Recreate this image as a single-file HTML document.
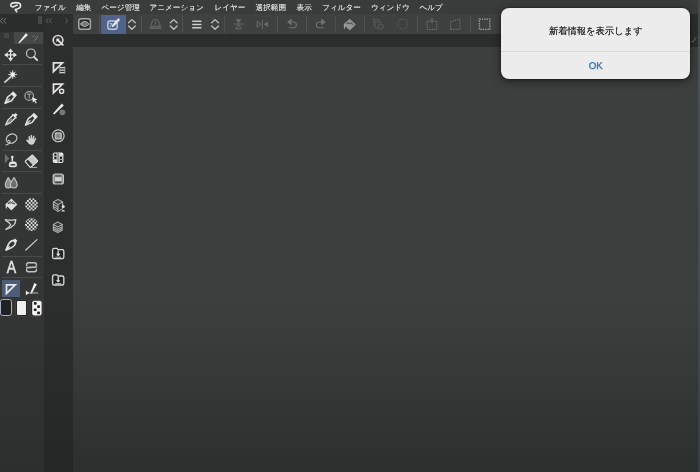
<!DOCTYPE html>
<html lang="ja">
<head>
<meta charset="utf-8">
<title>CLIP STUDIO PAINT</title>
<style>
*{margin:0;padding:0;box-sizing:border-box}
html,body{width:700px;height:472px;overflow:hidden;background:#2e3231}
body{position:relative;font-family:"Liberation Sans",sans-serif;color:#cfd0cf}
.abs{position:absolute}
#canvas{left:73px;top:47px;width:627px;height:425px;background:linear-gradient(180deg,#3b3f3d 0%,#3b3f3d 58%,#343837 79%,#2b2f2e 100%)}
#menubar{left:0;top:0;width:700px;height:14px;background:#393c3b}
#menubar span{position:absolute;top:2.8px;height:10px;line-height:10px;font-size:7.6px;color:#d6d7d6;white-space:nowrap;letter-spacing:0;text-rendering:geometricPrecision;filter:blur(0.35px);text-shadow:0 0 0.5px #d6d7d6}
#cmdbar{left:73px;top:14px;width:627px;height:20px;background:#3e4140}
#band{left:73px;top:34px;width:627px;height:13px;background:#2c2e2d}
#tools{left:0;top:14px;width:44px;height:458px;background:linear-gradient(180deg,#333635 0%,#333635 62%,#2c2f2e 100%)}
#sub{left:44px;top:14px;width:29px;height:458px;background:linear-gradient(180deg,#2c2e2d 0%,#2c2e2d 62%,#252726 100%)}
#toolhead{left:0;top:14px;width:44px;height:18px;background:#2b2d2c}
.vsep{position:absolute;top:16px;width:1px;height:17px;background:#4f5251}
.hsep{position:absolute;left:2px;width:40px;height:1px;background:#474a49}
svg{position:absolute;overflow:visible}
#dialog{left:501.3px;top:8.4px;width:188.6px;height:70.2px;border-radius:8px;background:#ececec;box-shadow:0 0 1.5px rgba(0,0,0,.75),0 2px 8px rgba(0,0,0,.55)}
#dialog .msg{position:absolute;left:0;top:16.3px;width:189px;text-align:center;font-size:9.3px;line-height:12px;color:#2c2c2c;text-rendering:geometricPrecision;filter:blur(0.3px);text-shadow:0 0 0.4px #2c2c2c}
#dialog .line{position:absolute;left:0;top:42.3px;width:189px;height:1px;background:#d9d9d9}
#dialog .ok{position:absolute;left:0;top:52.6px;width:189px;text-align:center;font-size:9.7px;line-height:12px;color:#2f70b6;-webkit-text-stroke:0.3px #2f70b6;text-rendering:geometricPrecision;filter:blur(0.35px)}
</style>
</head>
<body>
<div id="app" class="abs" style="left:0;top:0;width:700px;height:472px;filter:blur(0.45px)">
<div id="canvas" class="abs"></div>
<div id="menubar" class="abs">
<span style="left:34.7px">ファイル</span>
<span style="left:76.2px">編集</span>
<span style="left:101.5px">ページ管理</span>
<span style="left:149.5px">アニメーション</span>
<span style="left:214.4px">レイヤー</span>
<span style="left:255.6px">選択範囲</span>
<span style="left:296.6px">表示</span>
<span style="left:322.2px">フィルター</span>
<span style="left:371.0px">ウィンドウ</span>
<span style="left:419.5px">ヘルプ</span>
</div>
<div id="cmdbar" class="abs"></div>
<div id="band" class="abs"></div>
<div id="tools" class="abs"></div>
<div id="sub" class="abs"></div>
<div id="toolhead" class="abs"></div>

<!-- header controls -->
<div class="abs" style="left:38px;top:16.3px;width:4px;height:8px;background:#464948;filter:blur(0.4px)"></div>
<div class="abs" style="left:14px;top:32px;width:29px;height:12px;background:#454847"></div>
<div class="abs" style="left:4px;top:33px;width:5px;height:5px;background:#444746;filter:blur(0.5px)"></div>
<div class="abs" style="left:32px;top:34px;width:9px;height:8px;line-height:8px;font-size:6.5px;color:#8f9291;filter:blur(0.35px)">ツ</div>
<div class="hsep" style="top:64.1px"></div>
<div class="hsep" style="top:86.1px"></div>
<div class="hsep" style="top:107.6px"></div>
<div class="hsep" style="top:149.6px"></div>
<div class="hsep" style="top:171.1px"></div>
<div class="hsep" style="top:192.6px"></div>
<div class="hsep" style="top:256.1px"></div>
<div class="hsep" style="top:276.6px"></div>
<div class="abs" style="left:2px;top:280px;width:18px;height:17px;background:#4c5c79"></div>
<div class="abs" style="left:5.7px;top:260.4px;width:11px;height:16px;line-height:16px;font-size:16px;color:#e4e4e4;-webkit-text-stroke:0.45px #e4e4e4;transform:scaleX(0.88);transform-origin:50% 50%;filter:blur(0.4px)">A</div>
<!-- colour swatches -->
<div class="abs" style="left:0.4px;top:299.2px;width:11.6px;height:16.6px;background:#1f2221;border:1.8px solid #a8b0c6;border-radius:2.8px;filter:blur(0.4px)"></div>
<div class="abs" style="left:15.2px;top:298.6px;width:12.4px;height:18.8px;background:#242625;border:0.8px solid #3c3f3e;border-radius:3px"></div>
<div class="abs" style="left:16.8px;top:301px;width:9px;height:13.8px;background:#f0f0f0;border-radius:1px;filter:blur(0.4px)"></div>
<div class="abs" style="left:30.2px;top:298.6px;width:13.2px;height:18.8px;background:#242625;border:0.8px solid #3c3f3e;border-radius:3px"></div>
<!-- command bar -->
<div class="vsep" style="left:99px"></div>
<div class="vsep" style="left:140.5px"></div>
<div class="vsep" style="left:182.2px"></div>
<div class="vsep" style="left:224px"></div>
<div class="vsep" style="left:277.2px"></div>
<div class="vsep" style="left:306px"></div>
<div class="vsep" style="left:335px"></div>
<div class="vsep" style="left:364px"></div>
<div class="vsep" style="left:417.2px"></div>
<div class="vsep" style="left:470px"></div>
<div class="abs" style="left:101.1px;top:15px;width:24.9px;height:18.5px;background:#4f638b"></div>
<div class="abs" style="left:690px;top:14px;width:8px;height:33px;background:#2c2e2d"></div>
<svg id="icons" class="abs" style="left:0;top:0;filter:blur(0.4px)" width="700" height="472" viewBox="0 0 700 472" fill="none" stroke-linecap="round" stroke-linejoin="round">
<!--ICONS_START-->
<defs><pattern id="dots" x="25.1" y="198.2" width="3.7" height="3.7" patternUnits="userSpaceOnUse"><rect x="0" y="0" width="1.85" height="1.85" fill="#e4e4e4"/><rect x="1.85" y="1.85" width="1.85" height="1.85" fill="#e4e4e4"/></pattern></defs>
<!-- logo -->
<path d="M16.7,11.7 L15.3,9.5 C17.6,9 20.6,8 20.6,5.7 C20.6,3.5 18.4,2.6 15.8,2.6 C13,2.6 10.8,3.5 10.8,5.2 C10.8,6.6 12.2,7.2 13.5,6.7 C14.7,6.2 15.8,5.4 17.2,5.3" stroke="#e9e9e9" stroke-width="1.6"/>
<!-- header chevrons -->
<g stroke="#747776" stroke-width="1">
<path d="M2.6,18.3 L0.4,20.8 L2.6,23.3 M5.8,18.3 L3.6,20.8 L5.8,23.3"/>
<path d="M48,18.6 L46,20.7 L48,22.8 M51.4,18.6 L49.4,20.7 L51.4,22.8" stroke="#636665"/>
<path d="M65.6,18.4 L68,20.6 L65.6,22.8" stroke="#5e6160"/>
</g>
<!-- tab pen -->
<path d="M18.2,42.9 L25.9,33.3 L27.9,35 L19.4,43.3 Z" fill="#f2f2f2"/>
<!-- row1: move / zoom -->
<g stroke="#e2e2e2" stroke-width="1.3">
<path d="M10.6,50.5 V59.5 M6,54.9 H15.2"/>
</g>
<g fill="#e6e6e6">
<path d="M10.6,48.4 L13.2,52 H8 Z M10.6,61.4 L13.2,57.8 H8 Z M4.2,54.9 L7.8,52.3 V57.5 Z M17,54.9 L13.4,52.3 V57.5 Z"/>
</g>
<circle cx="30.9" cy="53.4" r="4.4" stroke="#c2c2c2" stroke-width="1.2"/>
<path d="M34,56.8 L37.2,60.2" stroke="#e0e0e0" stroke-width="1.8"/>
<!-- row2: wand -->
<path d="M10.6,77 L4.9,82.2" stroke="#cfcfcf" stroke-width="1.7"/>
<g stroke="#e4e4e4" stroke-width="0.9">
<path d="M12.7,70.6 V78.6 M8.7,74.6 H16.7 M10,71.9 L15.4,77.3 M15.4,71.9 L10,77.3"/>
</g>
<circle cx="12.7" cy="74.6" r="2.3" fill="#f0f0f0"/>
<!-- row3: pen nib / text cursor -->
<g transform="translate(9.9,98.5) rotate(45)">
<path d="M-2.1,-6.6 H2.1 V-3.2 L2.7,0.4 L0,6.9 L-2.7,0.4 L-2.1,-3.2 Z" stroke="#e0e0e0" stroke-width="1.5"/>
<path d="M-2.1,-6.6 H2.1 V-4 H-2.1 Z" fill="#e6e6e6"/>
<path d="M0,6.4 V0.6" stroke="#e6e6e6" stroke-width="1.1"/>
</g>
<circle cx="29.2" cy="96" r="4.3" stroke="#a6a6a6" stroke-width="1.2"/>
<path d="M27.4,94.2 H31 M29.2,94.2 V98.2" stroke="#a6a6a6" stroke-width="1"/>
<path d="M32.2,97.2 L37.4,99.6 L35.2,100.4 L36.8,102.8 L35.8,103.4 L34.2,101 L32.8,102.6 Z" fill="#eeeeee"/>
<!-- row4: eyedropper / pen nib -->
<g transform="translate(11,119.6) rotate(45)">
<path d="M-1.4,-8 H1.4 V-5 H-1.4 Z" fill="#e6e6e6"/>
<path d="M-2.3,-4.8 H2.3" stroke="#e6e6e6" stroke-width="1.4"/>
<path d="M-1.8,-4 V2.4 L0,7.6 L1.8,2.4 V-4" stroke="#e0e0e0" stroke-width="1.3"/>
<path d="M0,6.8 V-1" stroke="#d8d8d8" stroke-width="0.9"/>
</g>
<g transform="translate(30.5,120.2) rotate(45)">
<path d="M-2.1,-7 H2.1 V-3.4 L2.7,0.4 L0,7 L-2.7,0.4 L-2.1,-3.4 Z" stroke="#e0e0e0" stroke-width="1.5"/>
<path d="M-2.1,-7 H2.1 V-4.2 H-2.1 Z" fill="#e6e6e6"/>
<path d="M0,6.4 V0.6" stroke="#e6e6e6" stroke-width="1.1"/>
</g>
<!-- row5: lasso / hand -->
<g transform="rotate(-25 11.6 138.6)">
<ellipse cx="11.6" cy="138.6" rx="5.5" ry="4.4" stroke="#c4c4c4" stroke-width="1.2"/>
</g>
<path d="M8.2,140.4 C10.4,140.6 10.8,143 8.8,143.8 C7.8,144.4 6.8,144.8 5.8,145" stroke="#c4c4c4" stroke-width="1.1"/>
<path d="M27.4,139.4 L28.7,140.4 L28.4,136.4 L29.7,136 L30.5,139 L30.7,135 L32,135 L32.2,139 L33.3,135.6 L34.6,136 L33.9,139.8 L35.4,137.8 L36.3,138.6 L34.4,142.8 C33.8,144.4 32.7,144.8 31.4,144.8 C29.7,144.8 28.7,144 27.8,142.6 L26,140.2 Z" fill="#cfcfcf"/>
<!-- row6: stamp / eraser -->
<path d="M4.8,153.8 L9.4,158.6 L4.8,163.4 Z" fill="#6a6d6c"/>
<path d="M12.3,157 V160.6" stroke="#e4e4e4" stroke-width="1.5"/>
<circle cx="12.3" cy="157" r="1.3" fill="#e4e4e4"/>
<path d="M8.8,164.8 C8.8,162.2 10.4,161.2 12.8,161.2 C15.2,161.2 17,162.2 17,164.8 C17,166.6 16,167.2 14.8,167.2 H11 C9.8,167.2 8.8,166.6 8.8,164.8 Z" fill="#e2e2e2"/>
<path d="M10.6,164.8 H15.2" stroke="#303332" stroke-width="1.4" stroke-linecap="butt"/>
<g transform="translate(31.4,161.2) rotate(-42)">
<rect x="-5" y="-4.2" width="10" height="8.4" rx="0.8" fill="#c9c9c9" stroke="#e6e6e6" stroke-width="1"/>
<rect x="-4.4" y="-3.4" width="2.8" height="6.8" fill="#2e3130"/>
</g>
<path d="M32,167.4 H36.6" stroke="#c4c4c4" stroke-width="0.9"/>
<!-- row7: blend drops -->
<path d="M8.2,177.6 C9.8,180.2 12,182.4 12,184.6 C12,186.6 10.4,188 8.2,188 C6.4,188 5.2,186.6 5.2,184.6 C5.2,182.4 6.8,180.2 8.2,177.6 Z" fill="#8a8d8c" stroke="#c6c6c6" stroke-width="1.1"/>
<path d="M14,177.6 C15.6,180.2 17.2,182.4 17.2,184.6 C17.2,186.6 16,188 14,188 C11.8,188 10.4,186.6 10.4,184.6 C10.4,182.4 12.4,180.2 14,177.6 Z" fill="#6c6f6e" stroke="#c6c6c6" stroke-width="1.1"/>
<!-- row8: fill / pattern -->
<path d="M11.4,198.4 L17.4,204.4 L11.4,210.4 L5.4,204.4 Z" fill="#dedede"/>
<path d="M8.2,203.2 C9.4,200.8 13.2,200.6 14.6,203 L11.4,201.2 Z" fill="#2f3231"/>
<path d="M8,203.6 C9.8,202.4 12.6,202.6 14.8,204" stroke="#2f3231" stroke-width="1"/>
<path d="M6.4,203 C5.4,204.4 5.4,207 6.2,209.2 C7,207.4 7.4,205.6 8.4,204.6 Z" fill="#e2e2e2"/>
<circle cx="31.5" cy="204.5" r="6.5" fill="url(#dots)"/>
<!-- row9: contour / pattern -->
<path d="M5.4,219.6 C8.4,220.6 12.4,220.2 15.8,219.6 C15.8,221.6 15.2,223.4 14,224.8 C11.8,227.4 8.8,228.6 6,229.4" stroke="#d0d0d0" stroke-width="1.3"/>
<path d="M5.6,220.4 C8,221.6 9.8,223 10.8,224.8 C9.6,226.6 8,228 6.2,229" stroke="#d0d0d0" stroke-width="1.2"/>
<circle cx="31.5" cy="224.6" r="6.5" fill="url(#dots)"/>
<!-- row10: vector pen / line -->
<g transform="translate(11,245) rotate(45)">
<path d="M-1.7,-7.4 H1.7 V-4.8 H-1.7 Z" fill="#e6e6e6"/>
<path d="M-1.7,-4.8 C-3.1,-3.2 -3.3,0.6 0,7 C3.3,0.6 3.1,-3.2 1.7,-4.8 Z" stroke="#e2e2e2" stroke-width="1.6"/>
<path d="M0,6.6 V2.4" stroke="#e6e6e6" stroke-width="1.4"/>
</g>
<path d="M25.8,250 L37,239.6" stroke="#cfcfcf" stroke-width="1.2"/>
<!-- row11: balloon -->
<path d="M26.6,265.4 V264.6 C26.6,263.4 27.4,262.8 28.6,262.8 H34.4 C35.6,262.8 36.4,263.4 36.4,264.6 V265.4 M26.6,269.2 V270 C26.6,271.2 27.4,271.8 28.6,271.8 H34.4 C35.6,271.8 36.4,271.2 36.4,270 V269.2" stroke="#c4c4c4" stroke-width="1.4"/>
<path d="M26.8,267.6 L36.2,267" stroke="#c4c4c4" stroke-width="1.7"/>
<!-- row12: ruler / correct line -->
<path d="M6.5,284.9 H15.2 L6.5,293.4 Z" stroke="#e6e8ee" stroke-width="1.7" stroke-linejoin="miter"/>
<path d="M30.2,293.2 L34.4,283 L36.8,284.2 L31.8,293.6 Z" fill="#f2f2f2"/>
<path d="M28,293 H37.8" stroke="#c8c8c8" stroke-width="0.9"/>
<path d="M25.8,290.6 L29.2,292.9 L25.8,295.2 Z" fill="#ececec"/>
<!-- swatch 3 checker -->
<rect x="32.2" y="300.8" width="9.4" height="14.6" rx="2" fill="#f4f4f4"/>
<g fill="#1c1e1d">
<rect x="33.9" y="302.1" width="2.7" height="2.7" rx="0.8"/><rect x="37.2" y="305.3" width="2.7" height="2.7" rx="0.8"/>
<rect x="33.9" y="308.4" width="2.7" height="2.7" rx="0.8"/><rect x="37.2" y="311.5" width="2.7" height="2.7" rx="0.8"/>
</g>
<!-- sub panel -->
<circle cx="58" cy="40.3" r="4.8" stroke="#d6d6d6" stroke-width="1.7"/>
<path d="M58.4,40.6 L62.8,44.9" stroke="#e8e8e8" stroke-width="1.8"/>
<path d="M56.4,38.6 H60 L56.4,42.2 Z" fill="#e8e8e8"/>
<path d="M53.5,62.9 H62.4 L53.5,71.6 Z" stroke="#e0e0e0" stroke-width="1.8" stroke-linejoin="miter"/>
<rect x="59.6" y="67" width="5" height="6.2" fill="#2c2e2d"/>
<path d="M59.8,67.6 H64.8 M59.8,70.1 H64.8 M59.8,72.6 H64.8" stroke="#d2d2d2" stroke-width="1.2" stroke-linecap="butt"/>
<path d="M59.8,67 V73.2 M64.8,67 V73.2" stroke="#bdbdbd" stroke-width="0.7"/>
<path d="M53.5,84.1 H62.4 L53.5,92.8 Z" stroke="#e0e0e0" stroke-width="1.8" stroke-linejoin="miter"/>
<path d="M61.6,88.4 L64.5,91.3 L61.6,94.2 L58.7,91.3 Z" fill="#2c2e2d"/>
<circle cx="61.6" cy="91.3" r="2.1" stroke="#e4e4e4" stroke-width="1.4" fill="#2c2e2d"/>
<circle cx="62.4" cy="112.3" r="2.9" fill="#747776"/>
<path d="M53,113.6 L61.8,103.6 L63.8,105.4 L54.2,114.6 Z" fill="#e6e6e6"/>
<circle cx="58.2" cy="135.8" r="5.9" stroke="#c2c2c2" stroke-width="1.3"/>
<rect x="54.7" y="132.3" width="7.2" height="7.2" rx="1.6" fill="#bcbcbc"/>
<rect x="56.2" y="133.8" width="4.2" height="4.2" rx="0.6" fill="#858887"/>
<rect x="52.8" y="152.4" width="10.6" height="10.6" rx="1.8" fill="#e6e6e6"/>
<rect x="57.2" y="153" width="1.9" height="9.4" fill="#8e9190"/>
<path d="M53.4,156.2 H62.8 M53.4,159.4 H62.8" stroke="#8e9190" stroke-width="0.7"/>
<g fill="#1e201f">
<rect x="54.2" y="153.6" width="2.4" height="2.1" rx="0.6"/><rect x="54.2" y="156.8" width="2.4" height="2.1" rx="0.6"/>
<rect x="59.8" y="156.8" width="2.4" height="2.1" rx="0.6"/><rect x="59.8" y="160" width="2.4" height="2.1" rx="0.6"/>
</g>
<rect x="53.2" y="174" width="10.2" height="10" rx="2" fill="#8c8f8e" stroke="#c4c4c4" stroke-width="1.2"/>
<rect x="55" y="177.2" width="6.6" height="3.8" fill="#cfd1d0"/>
<rect x="55.4" y="175.4" width="5.8" height="1.1" fill="#4a4d4c"/>
<rect x="55.4" y="181.8" width="5.8" height="1.3" fill="#3c3f3e"/>
<g stroke="#a9acab" stroke-width="1.1">
<path d="M58,199.4 L62.6,202 V208.6 L58,211.4 L53.4,208.6 V202 Z"/>
<path d="M53.4,202 L58,204.6 L62.6,202 M58,204.6 V211.4"/>
<path d="M53.8,204.6 L57.6,206.8 M53.8,206.8 L57.6,209"/>
</g>
<path d="M58,200.6 L60.6,202 L58,203.4 L55.4,202 Z" fill="#3a3c3b"/>
<circle cx="63.2" cy="206.6" r="1.5" fill="#e2e2e2"/>
<path d="M61.4,211.6 C61.4,209.4 65,209.4 65,211.6 Z" fill="#cfcfcf"/>
<g stroke="#a9acab" stroke-width="1.1">
<path d="M57.8,222 L62.2,224.5 V230.2 L57.8,232.6 L53.4,230.2 V224.5 Z"/>
<path d="M53.4,224.5 L57.8,227 L62.2,224.5"/>
<path d="M53.8,226.9 L57.8,229.2 L61.8,226.9 M53.8,228.8 L57.8,231.1 L61.8,228.8"/>
</g>
<path d="M57.8,223.2 L60.2,224.5 L57.8,225.8 L55.4,224.5 Z" fill="#3a3c3b"/>
<g id="fold">
<path d="M52.6,250 C52.6,249 53.2,248.4 54.2,248.4 H57 L58,249.6 H62.2 C63.2,249.6 63.8,250.2 63.8,251.2 V257 C63.8,258 63.2,258.6 62.2,258.6 H54.2 C53.2,258.6 52.6,258 52.6,257 Z" stroke="#d9d9d9" stroke-width="1.3" fill="#232524"/>
<path d="M58.2,251 V255" stroke="#e6e6e6" stroke-width="1.3"/>
<path d="M56,253.8 L58.2,256.2 L60.4,253.8 Z" fill="#e6e6e6"/>
<path d="M55.6,257.2 H60.8" stroke="#c9c9c9" stroke-width="0.9"/>
</g>
<use href="#fold" y="26.4"/>
<!-- command bar icons -->
<rect x="78.8" y="18.7" width="11.6" height="10.6" rx="2.4" fill="#292b2a" stroke="#a6a8a7" stroke-width="1.5"/>
<path d="M80.6,24 C82.6,20.8 86.8,20.8 88.6,24 C86.8,27.2 82.6,27.2 80.6,24 Z" stroke="#b2b4b3" stroke-width="1.2"/>
<path d="M82.8,24 C83.8,22.6 85.6,22.6 86.6,24 C85.6,25.4 83.8,25.4 82.8,24 Z" stroke="#b2b4b3" stroke-width="1"/>
<rect x="107.8" y="21" width="9.4" height="8.2" rx="2.2" stroke="#c4cbdb" stroke-width="1.4"/>
<path d="M113,25.8 L118.6,19.6" stroke="#e4e8f0" stroke-width="2.4"/>
<path d="M110,27 L112,23.6 H109.8" stroke="#c4cbdb" stroke-width="0.9"/>
<g stroke="#c0c2c1" stroke-width="1.3">
<path d="M128.5,22.8 L131.9,19.6 L135.3,22.8 M128.5,26 L131.9,29.2 L135.3,26"/>
<path d="M170.3,22.8 L173.7,19.6 L177.1,22.8 M170.3,26 L173.7,29.2 L177.1,26"/>
<path d="M211.7,22.8 L215.1,19.6 L218.5,22.8 M211.7,26 L215.1,29.2 L218.5,26"/>
</g>
<path d="M149.9,28.5 L152,22.2 C153,20.2 154.4,19.3 155.5,19.3 C156.6,19.3 158,20.2 159,22.2 L161.1,28.5 Z" stroke="#616463" stroke-width="1.1"/>
<path d="M150.7,25.4 H160.3 L161.1,28.5 H149.9 Z" fill="#5a5d5c"/>
<path d="M155.5,21.6 V24" stroke="#616463" stroke-width="1"/>
<path d="M192.2,21.3 H201.4 M192.2,24.5 H201.4 M192.2,27.7 H201.4" stroke="#cccccc" stroke-width="1.6" stroke-linecap="butt"/>
<g stroke="#686b6a" stroke-width="1">
<path d="M234,24 H243.4"/>
<path d="M238.6,25 L241.2,28.8 H236 Z"/>
<path d="M262.4,20 V28.6"/>
<path d="M257.4,21.4 L261.2,24.2 L257.4,27 Z"/>
</g>
<path d="M235.6,19.2 H241.6 L238.6,23.2 Z" fill="#686b6a"/>
<path d="M267.8,21.4 L263.8,24.2 L267.8,27 Z" fill="#6c6f6e"/>
<g stroke="#6c6f6e" stroke-width="1.1">
<path d="M290.4,22 H293.4 C297.4,22 297.4,27.8 293.4,27.8 H289"/>
<path d="M322.4,22 H319.4 C315.4,22 315.4,27.8 319.4,27.8 H323.8"/>
</g>
<path d="M287,22 L291.6,18.6 V25.4 Z" fill="#6f7271"/>
<path d="M325.8,22 L321.2,18.6 V25.4 Z" fill="#6f7271"/>
<path d="M349.7,18.8 L355.9,24.6 L349.7,30.4 L343.5,24.6 Z" fill="#929594"/>
<path d="M346.4,23.6 C347.8,21.2 351.6,21 353,23.4 L349.8,21.4 Z" fill="#3e4140"/>
<path d="M346.2,24 C348,22.8 351,23 353.2,24.4" stroke="#3e4140" stroke-width="0.9"/>
<path d="M344.6,23.2 C343.6,24.8 343.6,27.2 344.4,29.4 C345.2,27.6 345.6,25.8 346.6,24.8 Z" fill="#9c9f9e"/>
<g stroke="#575a59" stroke-width="1">
<path d="M373.6,19.4 H379 V21.6"/>
<path d="M375.2,21.8 H380.6 V24"/>
<path d="M373.6,19.4 V26 M375.2,22.2 V27.8 H377.6"/>
<circle cx="380.8" cy="26.6" r="2.5"/>
</g>
<circle cx="402.7" cy="24.1" r="5" stroke="#5a5d5c" stroke-width="1.1" stroke-dasharray="1.2 1.1" stroke-linecap="butt"/>
<g stroke="#777a79" stroke-width="1" stroke-dasharray="1.3 1.1" stroke-linecap="butt" stroke-linejoin="miter">
<rect x="427.2" y="21.2" width="9.6" height="8.2"/>
<path d="M450.6,29.4 V21.8 L460,18.8 V29.4 Z"/>
</g>
<path d="M432,18 V22.6" stroke="#777a79" stroke-width="1" stroke-linecap="butt"/>
<rect x="479.4" y="19.2" width="10.4" height="10.2" stroke="#a2a4a3" stroke-width="1.3" stroke-dasharray="1.4 1" stroke-linecap="butt" stroke-linejoin="miter"/>
<path d="M691.4,41.4 L692.6,42.2 L696,37.6" stroke="#6a6d6c" stroke-width="1"/>
<!--ICONS_END-->
</svg>
<div class="abs" style="left:697.6px;top:0;width:2.4px;height:472px;background:linear-gradient(180deg,#434847 0%,#4a5154 12%,#474e51 50%,#394043 100%);filter:blur(0.4px)"></div>
<div id="dialog" class="abs">
<div class="msg">新着情報を表示します</div>
<div class="line"></div>
<div class="ok">OK</div>
</div>
</div>
</body>
</html>
